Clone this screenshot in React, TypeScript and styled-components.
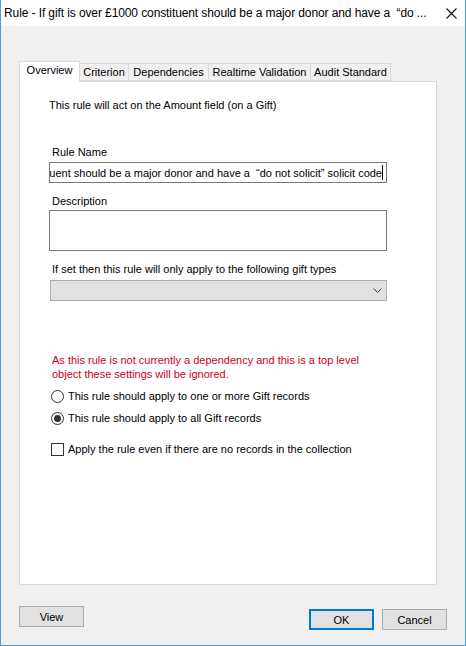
import React from "react";
import styled, { createGlobalStyle } from "styled-components";

const Global = createGlobalStyle`
  html, body { margin: 0; padding: 0; background: #f0f0f0; }
  * { box-sizing: border-box; }
`;

const Window = styled.div`
  width: 466px;
  height: 646px;
  border: 1px solid #4a9fd9;
  border-top: none;
  background: #f0f0f0;
  display: flex;
  flex-direction: column;
  font-family: "Liberation Sans", Arial, sans-serif;
  font-size: 11px;
  color: #000;
`;

const TitleBar = styled.div`
  height: 26px;
  background: #fff;
  display: flex;
  align-items: center;
  padding-left: 3px;
  padding-right: 8px;
  font-family: "Liberation Sans", Arial, sans-serif;
  font-size: 12px;
  color: #000;
`;

const TitleText = styled.div`
  flex: 1;
  min-width: 0;
  white-space: nowrap;
  overflow: hidden;
  letter-spacing: -0.1px;
`;

const CloseIcon = styled.svg`
  flex: none;
`;

const Body = styled.div`
  padding: 35px 0 0 17px;
  display: flex;
  flex-direction: column;
`;

const TabStrip = styled.div`
  display: flex;
  align-items: flex-end;
  height: 20px;
  position: relative;
  z-index: 1;
`;

const Tab = styled.div<{ $w: number; $active?: boolean }>`
  width: ${(p) => p.$w}px;
  height: ${(p) => (p.$active ? 21 : 18)}px;
  margin-bottom: ${(p) => (p.$active ? -1 : 0)}px;
  margin-left: -1px;
  border: 1px solid #d9d9d9;
  border-bottom: ${(p) => (p.$active ? "none" : "1px solid #d9d9d9")};
  background: ${(p) => (p.$active ? "#fff" : "#f0f0f0")};
  display: flex;
  align-items: ${(p) => (p.$active ? "flex-start" : "center")};
  padding-top: ${(p) => (p.$active ? 2 : 0)}px;
  justify-content: center;
  white-space: nowrap;
  &:first-child { margin-left: 1px; }
`;

const Panel = styled.div`
  width: 418px;
  height: 504px;
  margin-left: 1px;
  background: #fff;
  border: 1px solid #d9d9d9;
  display: flex;
  flex-direction: column;
  padding-left: 29px;
`;

const Line = styled.div<{ $top: number; $indent?: number }>`
  margin-top: ${(p) => p.$top}px;
  padding-left: ${(p) => p.$indent ?? 0}px;
  line-height: 13px;
  white-space: nowrap;
`;

const RedText = styled.div`
  margin-top: 52px;
  padding-left: 3px;
  color: #c8001a;
  line-height: 14px;
`;

const TextBox = styled.div<{ $top: number; $h: number }>`
  margin-top: ${(p) => p.$top}px;
  width: 338px;
  height: ${(p) => p.$h}px;
  border: 1px solid #7a7a7a;
  background: #fff;
  display: flex;
  align-items: center;
  justify-content: flex-end;
  overflow: hidden;
  padding-right: 3px;
  white-space: nowrap;
`;

const Caret = styled.span`
  display: inline-block;
  width: 1px;
  height: 15px;
  background: #000;
  flex: none;
`;

const Combo = styled.div`
  margin-top: 4px;
  margin-left: 1px;
  width: 337px;
  height: 21px;
  border: 1px solid #adadad;
  background: #e1e1e1;
  display: flex;
  align-items: center;
  justify-content: flex-end;
  padding-right: 4px;
`;

const OptionRow = styled.div<{ $top: number }>`
  margin-top: ${(p) => p.$top}px;
  display: flex;
  align-items: center;
  gap: 4px;
  padding-left: 2px;
  height: 14px;
`;

const Radio = styled.span<{ $checked?: boolean }>`
  width: 13px;
  height: 13px;
  border: 1px solid #333;
  border-radius: 50%;
  background: #fff;
  display: flex;
  align-items: center;
  justify-content: center;
  flex: none;
  &::after {
    content: "";
    width: 7px;
    height: 7px;
    border-radius: 50%;
    background: ${(p) => (p.$checked ? "#333" : "transparent")};
  }
`;

const Check = styled.span`
  width: 13px;
  height: 13px;
  border: 1px solid #333;
  background: #fff;
  flex: none;
`;

const Footer = styled.div`
  display: flex;
  align-items: flex-start;
  width: 429px;
`;

const Button = styled.div<{ $top: number; $default?: boolean; $gap?: number }>`
  margin-top: ${(p) => p.$top}px;
  margin-left: ${(p) => p.$gap ?? 0}px;
  width: 65px;
  height: 21px;
  border: ${(p) => (p.$default ? "2px solid #0078d7" : "1px solid #adadad")};
  background: #e1e1e1;
  display: flex;
  align-items: center;
  justify-content: center;
`;

const Spacer = styled.div`
  flex: 1;
`;

export default function App() {
  return (
    <>
      <Global />
      <Window>
        <TitleBar>
          <TitleText>
            Rule - If gift is over £1000 constituent should be a major donor and have a&nbsp; “do ...
          </TitleText>
          <CloseIcon width="11" height="11" viewBox="0 0 11 11">
            <path d="M0.5 0.5 L10.5 10.5 M10.5 0.5 L0.5 10.5" stroke="#111" strokeWidth="1.1" />
          </CloseIcon>
        </TitleBar>
        <Body>
          <TabStrip>
            <Tab $w={61} $active>Overview</Tab>
            <Tab $w={50}>Criterion</Tab>
            <Tab $w={81}>Dependencies</Tab>
            <Tab $w={103}>Realtime Validation</Tab>
            <Tab $w={81}>Audit Standard</Tab>
          </TabStrip>
          <Panel>
            <Line $top={17}>This rule will act on the Amount field (on a Gift)</Line>
            <Line $top={34} $indent={3}>Rule Name</Line>
            <TextBox $top={3} $h={21}>
              <span>Rule - If gift is over £1000 constituent should be a major donor and have a&nbsp; “do not solicit” solicit code</span>
              <Caret />
            </TextBox>
            <Line $top={12} $indent={3}>Description</Line>
            <TextBox $top={2} $h={41} />
            <Line $top={12} $indent={3}>If set then this rule will only apply to the following gift types</Line>
            <Combo>
              <svg width="9" height="5" viewBox="0 0 9 5">
                <path d="M0.5 0.5 L4.5 4.5 L8.5 0.5" fill="none" stroke="#444" strokeWidth="1" />
              </svg>
            </Combo>
            <RedText>
              As this rule is not currently a dependency and this is a top level
              <br />
              object these settings will be ignored.
            </RedText>
            <OptionRow $top={8}>
              <Radio />
              <span>This rule should apply to one or more Gift records</span>
            </OptionRow>
            <OptionRow $top={8}>
              <Radio $checked />
              <span>This rule should apply to all Gift records</span>
            </OptionRow>
            <OptionRow $top={17}>
              <Check />
              <span>Apply the rule even if there are no records in the collection</span>
            </OptionRow>
          </Panel>
          <Footer>
            <Button $top={21} $gap={1}>View</Button>
            <Spacer />
            <Button $top={24} $default>OK</Button>
            <Button $top={24} $gap={8}>Cancel</Button>
          </Footer>
        </Body>
      </Window>
    </>
  );
}
